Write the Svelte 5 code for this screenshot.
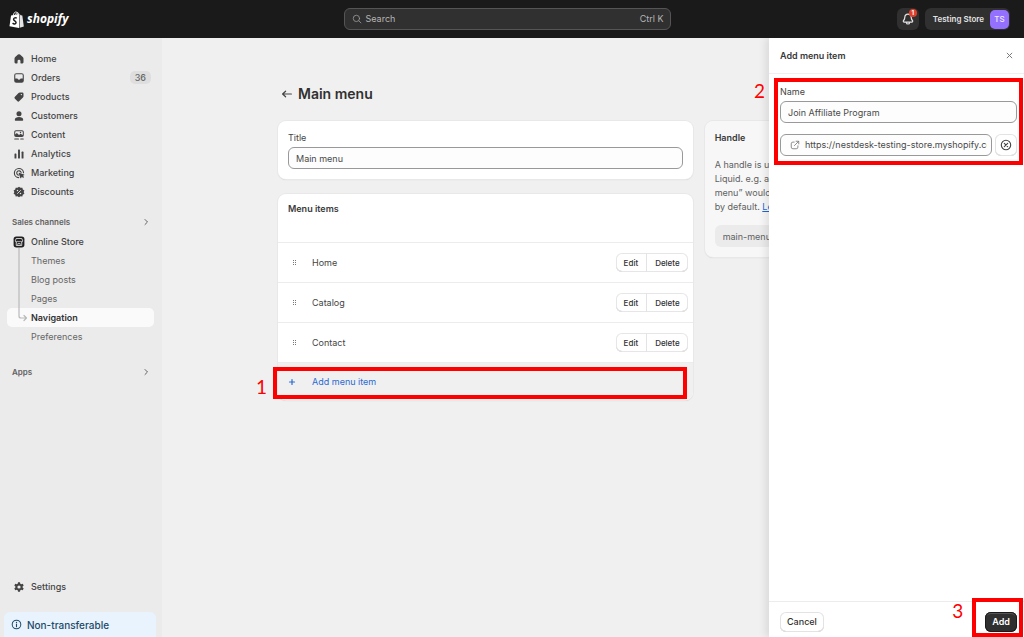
<script>
  const mainNav = [
    { label: 'Home', icon: 'home' },
    { label: 'Orders', icon: 'orders', badge: '36' },
    { label: 'Products', icon: 'products' },
    { label: 'Customers', icon: 'customers' },
    { label: 'Content', icon: 'content' },
    { label: 'Analytics', icon: 'analytics' },
    { label: 'Marketing', icon: 'marketing' },
    { label: 'Discounts', icon: 'discounts' }
  ];
  const storeNav = ['Themes', 'Blog posts', 'Pages', 'Navigation', 'Preferences'];
  const menuItems = ['Home', 'Catalog', 'Contact'];

  let title = $state('Main menu');
  let name = $state('Join Affiliate Program');
  let link = $state('https://nestdesk-testing-store.myshopify.com/pages/affiliate');
  let handle = $state('main-menu');
</script>

{#snippet chevron()}
  <svg class="chevron" viewBox="0 0 8 8" aria-hidden="true"><path d="M3 1.500l2.500 2.500L3 6.500" fill="none" stroke="currentColor" stroke-width="1" stroke-linecap="round" stroke-linejoin="round" /></svg>
{/snippet}

{#snippet icon(kind)}
  <svg class="icon" viewBox="0 0 20 20" fill="currentColor" aria-hidden="true">
    {#if kind === 'home'}
      <path d="M8.3 2.7a2.6 2.6 0 0 1 3.4 0l4.6 4A3.4 3.4 0 0 1 17.5 9.300V15.500A1.800 1.800 0 0 1 15.700 17.300H13.300A.9.9 0 0 1 12.400 16.400V13.500a2.400 2.400 0 0 0-4.800 0V16.400A.9.9 0 0 1 6.700 17.300H4.300A1.800 1.800 0 0 1 2.500 15.500V9.300A3.400 3.400 0 0 1 3.700 6.700z" />
    {:else if kind === 'orders'}
      <path fill-rule="evenodd" d="M5.500 2h9A3.500 3.500 0 0 1 18 5.500v9a3.500 3.500 0 0 1-3.500 3.500h-9A3.500 3.500 0 0 1 2 14.500v-9A3.500 3.500 0 0 1 5.500 2zM5.500 3.800c-1 0-1.700.7-1.700 1.700V11h2.900c.5 0 .9.300 1.100.700a2.500 2.500 0 0 0 4.400 0c.2-.4.600-.7 1.100-.7h2.900V5.500c0-1-.7-1.700-1.700-1.700z" />
    {:else if kind === 'products'}
      <path fill-rule="evenodd" d="M11.300 2.500h4.200a2 2 0 0 1 2 2v4.200a3 3 0 0 1-.9 2.100l-6 6a2.500 2.500 0 0 1-3.600 0L3.200 13a2.500 2.500 0 0 1 0-3.600l6-6a3 3 0 0 1 2.100-.9zM14 7.200a1.200 1.200 0 1 0 0-2.400 1.200 1.200 0 0 0 0 2.400z" />
    {:else if kind === 'customers'}
      <circle cx="10" cy="6.200" r="4.200" />
      <path d="M3 16.200C3 13.300 6 11.800 10 11.800s7 1.500 7 4.400c0 1-.7 1.600-1.700 1.600H4.700C3.700 17.800 3 17.200 3 16.200z" />
    {:else if kind === 'content'}
      <path fill-rule="evenodd" d="M5 2h10a3 3 0 0 1 3 3v5.500a3 3 0 0 1-3 3H5a3 3 0 0 1-3-3V5a3 3 0 0 1 3-3zM3.700 9l2.700-2.200L10 10l2.500-2 3.800 2V5c0-.8-.5-1.300-1.300-1.300H5C4.200 3.700 3.700 4.200 3.700 5zM12.500 7a1.200 1.200 0 1 0 0-2.400 1.200 1.200 0 0 0 0 2.400z" />
      <rect x="2" y="15.800" width="8" height="1.800" rx=".9" />
      <rect x="12" y="15.800" width="6" height="1.800" rx=".9" />
    {:else if kind === 'analytics'}
      <rect x="2.500" y="9" width="3.200" height="8.500" rx="1" />
      <rect x="8.400" y="2.500" width="3.200" height="15" rx="1" />
      <rect x="14.300" y="6" width="3.200" height="11.500" rx="1" />
    {:else if kind === 'marketing'}
      <g fill="none" stroke="currentColor" stroke-width="1.900" stroke-linecap="round">
        <path d="M17.500 9.500A7.600 7.600 0 1 0 9.500 17.600" />
        <path d="M13.500 9A3.700 3.700 0 1 0 9 13.600" />
      </g>
      <path d="M10.200 9.600l8.200 2.700c.7.200.7 1 .1 1.300l-2.100 1.100 2 2.100-1.600 1.600-2.100-2-1.100 2.100c-.3.600-1.200.5-1.400-.1L9.500 10.300c-.1-.4.300-.8.700-.7z" />
    {:else if kind === 'discounts'}
      <path d="M10 1.200l2.500 1.900 3.100-.3.800 3 2.600 1.700L17.800 10l1.200 2.800-2.700 1.600-.8 3-3.100-.4L10 18.900 7.600 17l-3.100.4-.8-3L1 12.800 2.200 10 1 7.500l2.700-1.700.8-3 3.100.3z" />
      <g fill="none" stroke="#ebebeb" stroke-width="1.500" stroke-linecap="round"><path d="M7.500 12.500l5-5" /></g>
      <circle cx="7.500" cy="7.600" r="1.200" fill="#ebebeb" /><circle cx="12.500" cy="12.400" r="1.200" fill="#ebebeb" />
    {:else if kind === 'settings'}
      <path fill-rule="evenodd" d="M8.400 2h3.200l.6 2.500 1.500.8 2.500-.7 1.600 2.800L16 9.200v1.600l1.800 1.800-1.600 2.800-2.500-.7-1.500.8-.6 2.500H8.400l-.6-2.500-1.500-.8-2.500.7-1.600-2.800L4 10.800V9.200L2.200 7.400l1.600-2.800 2.500.7 1.500-.8zM10 12.700a2.700 2.700 0 1 0 0-5.400 2.700 2.700 0 0 0 0 5.400z" />
    {:else if kind === 'store'}
      <rect x="1" y="1" width="18" height="18" rx="4.500" fill="#1f1f1f" />
      <path d="M5.300 4.200h9.400l1.300 3.600a1.900 1.900 0 0 1-1.400 2V15.800H5.400V9.800A1.900 1.900 0 0 1 4 7.800z" fill="none" stroke="#ebebeb" stroke-width="1.400" stroke-linejoin="round" />
      <path d="M4.200 8.200c1 2 3 2 3.800 0 .8 2 3.200 2 4 0 .8 2 2.900 2 3.800 0M8 15.500v-3h4v3" fill="none" stroke="#ebebeb" stroke-width="1.200" />
    {/if}
  </svg>
{/snippet}

<div class="app">
  <header class="topbar">
    <a class="logo" href="#home" aria-label="Shopify home">
      <svg class="bag" viewBox="0 0 16 18" aria-hidden="true">
        <path d="M2.200 4.600L10.700 3v15L.5 16.200z" fill="#fff" />
        <path d="M11.300 3.200l1.200 1.300 1.700.2 1.600 11.900-4.500 1.200z" fill="#e4e4e4" />
        <path d="M4.500 4.500C4.900 2.300 6.200.8 7.500.9c1.200.1 1.700 1.500 1.700 3M7 4C7.300 2.500 8.300 1.500 9.200 1.600c.8.200 1.200 1 1.400 1.900" fill="none" stroke="#fff" stroke-width=".9" />
        <path d="M8.300 7.600C6.900 6.900 5 7.100 4.900 8.700c-.1 1.700 2.700 1.700 2.600 3.500-.1 1.800-2.200 1.900-3.700.7" fill="none" stroke="#1a1a1a" stroke-width="1.600" />
      </svg>
      <span>shopify</span>
    </a>
    <button class="search" type="button">
      <svg viewBox="0 0 12 12" aria-hidden="true"><g fill="none" stroke="currentColor" stroke-width="1" stroke-linecap="round"><circle cx="5.300" cy="5.300" r="3.800" /><path d="M8.300 8.300L10.700 10.700" /></g></svg>
      <span>Search</span>
      <span class="keys">Ctrl K</span>
    </button>
    <div class="account">
      <button class="bell" type="button" aria-label="Notifications">
        <svg viewBox="0 0 14 14" aria-hidden="true"><path d="M7 2.200c-2 0-3.100 1.500-3.200 3.200-.1 1.600-.4 2.200-1.200 3.100-.6.700-.3 1.700.7 1.700h7.400c1 0 1.300-1 .7-1.700-.8-.9-1.100-1.500-1.200-3.100C10.100 3.700 9 2.200 7 2.200zM5.400 10.400a1.600 1.600 0 0 0 3.200 0" fill="none" stroke="currentColor" stroke-width="1.200" stroke-linejoin="round" /></svg>
        <span class="count">1</span>
      </button>
      <button class="store" type="button">
        <span>Testing Store</span>
        <span class="avatar">TS</span>
      </button>
    </div>
  </header>

  <div class="body">
    <nav class="sidebar" aria-label="Main">
      <ul>
        {#each mainNav as item}
          <li><a class="row" href="#{item.icon}">{@render icon(item.icon)}<span>{item.label}</span>{#if item.badge}<span class="badge">{item.badge}</span>{/if}</a></li>
        {/each}
      </ul>
      <button class="section" type="button">Sales channels {@render chevron()}</button>
      <a class="row" href="#store">{@render icon('store')}<span>Online Store</span></a>
      <ul class="sub">
        {#each storeNav as label}
          <li><a class="row child" class:current={label === 'Navigation'} href="#{label}">{label}</a></li>
        {/each}
        <svg class="branch" viewBox="0 0 10 74" aria-hidden="true"><path d="M1 0V68a2 2 0 0 0 2 2H8M6 67.500L8.500 70 6 72.500" fill="none" stroke="#b9b9b9" stroke-width="1.200" stroke-linejoin="round" stroke-linecap="round" /></svg>
      </ul>
      <button class="section apps" type="button">Apps {@render chevron()}</button>
      <div class="bottom">
        <a class="row" href="#settings">{@render icon('settings')}<span>Settings</span></a>
        <div class="notice">
          <svg viewBox="0 0 12 12" aria-hidden="true"><circle cx="6" cy="6" r="4.700" fill="none" stroke="currentColor" stroke-width="1.100" /><path d="M6 5.500v3" stroke="currentColor" stroke-width="1.200" stroke-linecap="round" /><circle cx="6" cy="3.700" r=".75" fill="currentColor" /></svg>
          <span>Non-transferable</span>
        </div>
      </div>
    </nav>

    <main>
      <div class="heading">
        <a class="back" href="#navigation" aria-label="Back"><svg viewBox="0 0 12 12" aria-hidden="true"><path d="M10.400 6H1.800M4.600 3.200L1.600 6l3 2.800" fill="none" stroke="currentColor" stroke-width="1.200" stroke-linecap="round" stroke-linejoin="round" /></svg></a>
        <h1>Main menu</h1>
      </div>
      <div class="columns">
        <div class="stack">
          <section class="card form">
            <label for="title">Title</label>
            <input id="title" class="box" type="text" bind:value={title} />
          </section>
          <section class="card">
            <h2 class="items-title">Menu items</h2>
            <ul>
              {#each menuItems as item}
                <li class="item">
                  <svg class="grip" viewBox="0 0 6 8" fill="#777" aria-hidden="true"><rect x="1" y="1" width="1" height="1" /><rect x="3" y="1" width="1" height="1" /><rect x="1" y="3" width="1" height="1" /><rect x="3" y="3" width="1" height="1" /><rect x="1" y="5" width="1" height="1" /><rect x="3" y="5" width="1" height="1" /></svg>
                  <span>{item}</span>
                  <div class="group">
                    <button type="button">Edit</button>
                    <button type="button">Delete</button>
                  </div>
                </li>
              {/each}
            </ul>
            <div class="add-row">
              <button class="add-item" type="button">
                <svg viewBox="0 0 8 8" aria-hidden="true"><path d="M4 1.500v5M1.500 4h5" stroke="currentColor" stroke-width="1.200" stroke-linecap="round" /></svg>
                <span>Add menu item</span>
              </button>
              <span class="mark mark-one"></span>
              <span class="step step-one">1</span>
            </div>
          </section>
        </div>
        <aside class="card handle">
          <h2>Handle</h2>
          <p>A handle is used to reference a menu in<br />Liquid. e.g. a menu with the title “Sidebar<br />menu” would have the handle sidebar-menu<br />by default. <a href="#learn">Learn more</a></p>
          <input type="text" aria-label="Handle" readonly bind:value={handle} />
        </aside>
      </div>
    </main>

    <div class="drawer" role="dialog" aria-labelledby="drawer-title">
      <div class="drawer-head">
        <h2 id="drawer-title">Add menu item</h2>
        <button class="close" type="button" aria-label="Close"><svg viewBox="0 0 8 8" aria-hidden="true"><path d="M1.300 1.300l5.400 5.400M6.700 1.300L1.300 6.700" stroke="currentColor" stroke-width="1.100" stroke-linecap="round" /></svg></button>
      </div>
      <div class="drawer-body">
        <div class="fields">
          <label for="name">Name</label>
          <input id="name" class="box" type="text" bind:value={name} />
          <div class="link-row">
            <div class="box link">
              <svg viewBox="0 0 12 12" aria-hidden="true"><g fill="none" stroke="#777" stroke-width="1" stroke-linecap="round" stroke-linejoin="round"><path d="M7.300 1.500h3.200v3.200M10.300 1.700L5.300 6.700" /><path d="M5 2.500H3.500a2 2 0 0 0-2 2v4a2 2 0 0 0 2 2h4a2 2 0 0 0 2-2V7" /></g></svg>
              <input type="text" aria-label="Link" bind:value={link} />
            </div>
            <button class="clear" type="button" aria-label="Clear link"><svg viewBox="0 0 12 12" aria-hidden="true"><g fill="none" stroke="#444" stroke-width="1.100" stroke-linecap="round"><circle cx="6" cy="6" r="4.700" /><path d="M4.300 4.300l3.400 3.400M7.700 4.300l-3.400 3.400" /></g></svg></button>
          </div>
          <span class="mark mark-two"></span>
          <span class="step step-two">2</span>
        </div>
      </div>
      <div class="drawer-foot">
        <button class="cancel" type="button">Cancel</button>
        <div class="submit">
          <button class="add" type="button">Add</button>
          <span class="mark mark-three"></span>
          <span class="step step-three">3</span>
        </div>
      </div>
    </div>
  </div>
</div>

<style>
  :global(body) { margin: 0; background: #f0f0f0; }
  :global(*) { box-sizing: border-box; }
  .app {
    display: flex; flex-direction: column; min-height: 100vh;
    font: 400 9px/14px Inter, sans-serif; color: #444;
  }
  ul { list-style: none; margin: 0; padding: 0; }
  h1, h2, p { margin: 0; }
  h2 { font-size: 9px; line-height: 14px; font-weight: 600; color: #3a3a3a; }
  button, input { font: inherit; color: inherit; }
  button { border: 0; background: none; padding: 0; cursor: pointer; }
  a { color: inherit; text-decoration: none; }
  svg { flex: none; display: block; }

  .topbar {
    display: grid; grid-template-columns: 1fr minmax(0, 327px) 1fr; align-items: center;
    height: 38px; padding: 0 14px 0 4px; background: #1a1a1a; color: #e3e3e3;
  }
  .logo { display: flex; align-items: center; gap: 3px; padding-left: 5px; color: #fff; font: italic 700 12px/18px "Open Sans", sans-serif; }
  .bag { width: 15px; height: 17px; }
  .search {
    display: flex; align-items: center; gap: 4px; height: 22px; padding: 0 6px 0 7px;
    border: 1px solid #555; border-radius: 6px; background: #303030; color: #b5b5b5;
  }
  .search svg { width: 10px; height: 10px; color: #999; }
  .keys { margin-left: auto; }
  .account { display: flex; justify-content: flex-end; gap: 6px; }
  .bell { position: relative; display: grid; place-items: center; width: 22px; height: 22px; border-radius: 6px; background: #303030; }
  .bell svg { width: 14px; height: 14px; }
  .count {
    position: absolute; top: 1px; right: 2px; width: 8px; height: 8px; border-radius: 50%;
    background: #e0402b; color: #fff; font-size: 6px; line-height: 8px; font-weight: 700; text-align: center;
  }
  .store { display: flex; align-items: center; gap: 6px; height: 22px; padding: 0 1px 0 8px; border-radius: 6px; background: #303030; font-size: 8px; font-weight: 600; }
  .avatar { width: 19px; height: 19px; border-radius: 5px; background: #9470ff; color: #efe8ff; line-height: 19px; font-weight: 500; }

  .body { position: relative; display: flex; flex: 1; overflow: hidden; }
  .sidebar {
    display: flex; flex-direction: column; flex: 0 0 162px; padding: 11px 8px 0 7px;
    background: #ebebeb; font-weight: 500;
  }
  .row { display: flex; align-items: center; gap: 6px; height: 19px; padding: 0 3px 0 6px; border-radius: 5px; }
  .icon { width: 12px; height: 12px; }
  .badge { margin-left: auto; padding: 0 5px; border-radius: 5px; background: #dedede; color: #666; line-height: 13px; }
  .section { display: flex; align-items: center; justify-content: space-between; height: 20px; margin-top: 11px; padding: 0 4px 0 5px; color: #616161; font-size: 8px; font-weight: 600; }
  .section.apps { margin-top: 16px; }
  .chevron { width: 8px; height: 8px; }
  .sub { position: relative; color: #666; font-weight: 400; }
  .child { padding-left: 24px; }
  .current { background: #fafafa; color: #333; font-weight: 600; }
  .branch { position: absolute; left: 11px; top: -3px; width: 10px; height: 74px; }
  .bottom { margin-top: auto; }
  .notice {
    display: flex; align-items: center; gap: 5px; height: 25px; margin: 16px -2px 0 -3px; padding-left: 7px;
    border-radius: 6px 6px 0 0; background: #e8f3fe; color: #1d4a66; font-size: 10px;
  }
  .notice svg { width: 11px; height: 11px; }

  main { flex: 1; min-width: 0; padding: 47px 112px 24px 116px; }
  .heading { display: flex; align-items: center; gap: 5px; height: 18px; padding-left: 3px; margin-bottom: 18px; }
  .back svg { width: 12px; height: 12px; }
  h1 { font-size: 14px; line-height: 18px; font-weight: 600; color: #303030; }
  .columns { display: grid; grid-template-columns: minmax(0, 2fr) minmax(0, 1fr); gap: 12px; align-items: start; }
  .stack { display: grid; gap: 15px; }
  .card { border-radius: 8px; background: #fff; box-shadow: 0 0 0 1px #e8e8e8, 0 1px 1px #ccc; }
  .form { display: flex; flex-direction: column; gap: 2px; padding: 10px; }
  .box { width: 100%; height: 22px; padding: 0 7px; border: 1px solid #999; border-radius: 6px; background: #fdfdfd; color: #4a4a4a; }
  .items-title { height: 49px; padding: 8px 10px; border-bottom: 1px solid #ececec; }
  .item { display: flex; align-items: center; height: 40px; padding: 0 5px 0 14px; border-bottom: 1px solid #ececec; }
  .grip { width: 6px; height: 8px; margin-right: 14px; }
  .group { display: flex; margin-left: auto; border-radius: 6px; background: #fff; box-shadow: inset 0 0 0 1px #e6e6e6, inset 0 -1px 0 #bbb; }
  .group button { height: 19px; padding: 0 8px; font-size: 8px; font-weight: 500; color: #303030; }
  .group button + button { border-left: 1px solid #e3e3e3; }
  .add-row { position: relative; }
  .add-item { display: flex; align-items: center; gap: 16px; width: 100%; height: 37px; padding: 1px 10px 0; border-radius: 0 0 8px 8px; background: #f0f0f0; color: #2c6ad0; }
  .add-item svg { width: 8px; height: 8px; }
  .handle { padding: 10px; background: #f7f7f7; }
  .handle p { margin: 13px 0 11px; color: #616161; white-space: nowrap; }
  .handle a { color: #1f66d6; text-decoration: underline; }
  .handle input { width: 100%; height: 22px; padding: 0 8px; border: 0; border-radius: 6px; background: #ebebeb; color: #616161; }

  .drawer {
    position: absolute; top: 0; right: 0; bottom: 0; width: 255px;
    display: flex; flex-direction: column; background: #fff; box-shadow: -3px 0 8px rgba(0, 0, 0, .1);
  }
  .drawer-head { display: flex; align-items: center; justify-content: space-between; height: 36px; padding: 0 11px; border-bottom: 1px solid #f0f0f0; }
  .close svg { width: 7px; height: 7px; color: #777; }
  .drawer-body { flex: 1; padding: 11px 7px 0 11px; }
  .fields { position: relative; display: flex; flex-direction: column; gap: 2px; }
  .link-row { display: flex; gap: 3px; margin-top: 9px; }
  .link { display: flex; align-items: center; gap: 5px; min-width: 0; padding: 0 4px 0 9px; }
  .link svg { width: 10px; height: 10px; }
  .link input { flex: 1; min-width: 0; padding: 0; border: 0; background: none; }
  .clear { flex: none; display: grid; place-items: center; width: 22px; height: 22px; border-radius: 6px; box-shadow: inset 0 0 0 1px #e3e3e3, inset 0 -1px 0 #c4c4c4; }
  .clear svg { width: 12px; height: 12px; }
  .drawer-foot { display: flex; align-items: flex-start; justify-content: space-between; height: 36px; padding: 10px 7px 0 11px; border-top: 1px solid #ececec; }
  .drawer-foot button { height: 20px; padding: 0 7px; border-radius: 6px; font-weight: 500; }
  .cancel { background: #fff; color: #303030; box-shadow: inset 0 0 0 1px #e3e3e3, inset 0 -1px 0 #bbb; }
  .submit { position: relative; }
  .drawer-foot .add { background: #303030; color: #fff; font-weight: 600; box-shadow: inset 0 0 0 1px #1a1a1a, inset 0 2px 0 #555; }

  .mark { position: absolute; border: 4px solid #fe0000; pointer-events: none; }
  .mark-one { inset: 4px 6px 1px -5px; }
  .mark-two { inset: -7px -6px -9px -6px; }
  .mark-three { inset: -14px -6px -5px -13px; }
  .step { position: absolute; color: #fe0000; font: 400 19px/20px Lato, sans-serif; }
  .step-one { left: -22px; top: 14px; }
  .step-two { left: -26px; top: -4px; }
  .step-three { left: -33px; top: -11px; }
</style>
